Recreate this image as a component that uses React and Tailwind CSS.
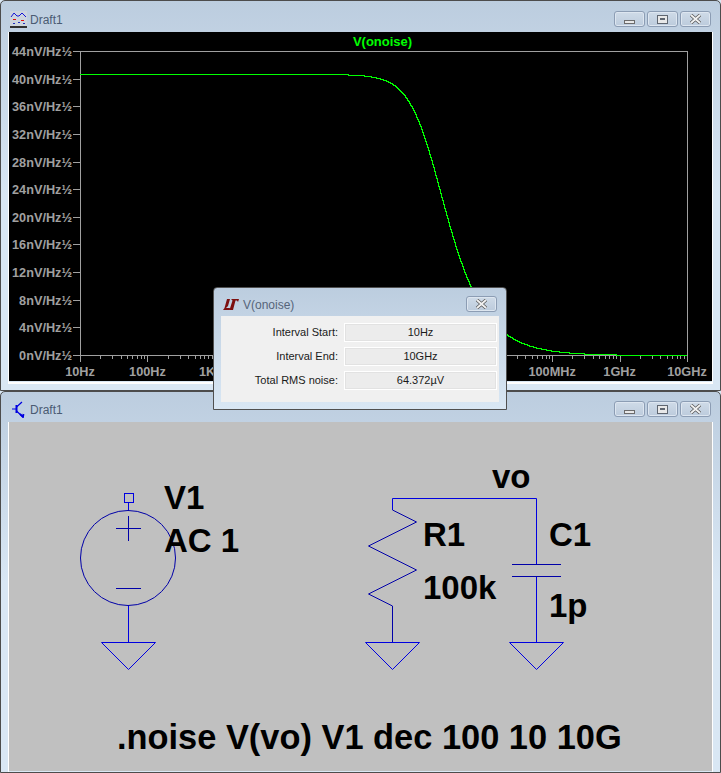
import React from 'react';

const UI_FONT = "font-['Liberation_Sans',sans-serif]";

const yTicks = [44, 40, 36, 32, 28, 24, 20, 16, 12, 8, 4, 0];
const xLabels = ['10Hz', '100Hz', '1KHz', '10KHz', '100KHz', '1MHz', '10MHz', '100MHz', '1GHz', '10GHz'];

const PLOT = { left: 80, right: 687, top: 51, bottom: 355 };
const DECADE = (PLOT.right - PLOT.left) / 9;

const yOf = (v) => PLOT.bottom - (v * (PLOT.bottom - PLOT.top)) / 44;

// single pole rolloff of the RC, 1/(2*pi*R*C) = 1.59MHz
function curvePoints() {
  const pts = [];
  for (let x = PLOT.left; x <= PLOT.right; x += 1) {
    const f = Math.pow(10, 1 + (x - PLOT.left) / DECADE);
    const v = 40.67 / Math.sqrt(1 + Math.pow(f / 1.59e6, 2));
    pts.push(`${x},${Math.round(yOf(v)) + 0.5}`);
  }
  return pts.join(' ');
}

function minorTicks() {
  const out = [];
  for (let d = 0; d < 9; d++) {
    for (let m = 2; m < 10; m++) {
      const x = Math.round(PLOT.left + (d + Math.log10(m)) * DECADE) + 0.5;
      out.push(<line key={`${d}-${m}`} x1={x} x2={x} y1={355} y2={359} />);
    }
  }
  return out;
}

function WaveIcon() {
  return (
    <svg width="17" height="17" viewBox="0 0 17 17" shapeRendering="crispEdges" fill="none">
      <rect x="0" y="0" width="17" height="16" fill="#cdd5de" />
      <path d="M1 6 L4 2 L7 5 L9 5 L12 2 L16 6" stroke="#1414d8" shapeRendering="auto" />
      <path d="M3 8.5 H6 M11 9.5 H14" stroke="#e01010" />
      <path d="M3 12.5 H5 M8 11.5 H10 M13 12.5 H15" stroke="#2030c0" />
      <path d="M0 15.5 H17" stroke="#303030" strokeWidth="2" />
    </svg>
  );
}

function TransistorIcon() {
  return (
    <svg width="17" height="17" viewBox="0 0 17 17" fill="none" stroke="#0000e0" strokeWidth="1.2">
      <path d="M6.5 4 V12" strokeWidth="2" />
      <path d="M2 8 H6.5 M6.5 6 L12 1 M6.5 10 L13 16" />
      <path d="M10 13 L13 16 L13.5 13" strokeWidth="1.8" />
    </svg>
  );
}

function CaptionButton({ kind }) {
  return (
    <div className="h-[16px] w-[31px] rounded-[3px] border border-[#8c9db4] bg-gradient-to-b from-[#cfdbe8] to-[#bccbdc] flex items-center justify-center shadow-[inset_0_0_0_1px_#dde6f0]">
      {kind === 'min' && <div className="w-[11px] h-[4px] mt-[5px] bg-[#e8e8e8] border border-[#6b6b6b]" />}
      {kind === 'max' && <div className="w-[11px] h-[9px] bg-[#e8e8e8] border border-[#5f6670] flex items-center justify-center"><div className="w-[5px] h-[2px] border border-[#5f6670] bg-[#c8d4e2]" /></div>}
      {kind === 'close' && <CloseGlyph />}
    </div>
  );
}

function CloseGlyph() {
  return (
    <svg width="13" height="10" viewBox="0 0 13 10">
      <path d="M2 1 L11 9 M11 1 L2 9" stroke="#5a5a5a" strokeWidth="3.4" />
      <path d="M2 1 L11 9 M11 1 L2 9" stroke="#f2f2f2" strokeWidth="1.8" />
    </svg>
  );
}

function Window({ icon, heightClass, titleClass, children }) {
  return (
    <div className={`${heightClass} flex flex-col rounded-t-[5px] border border-[#4c4c4c] bg-gradient-to-b from-[#bccddf] via-[#d9e7f4] to-[#d9e7f4] overflow-hidden shrink-0`}>
      <div className={`${titleClass} flex items-center shrink-0 pl-[9px] pr-[9px]`}>
        <div className="w-[20px] flex items-center">{icon}</div>
        <span className={`mt-[1px] text-[12px] text-[#4a5b72] ${UI_FONT}`}>Draft1</span>
        <div className="ml-auto flex gap-[2px]">
          <CaptionButton kind="min" />
          <CaptionButton kind="max" />
          <CaptionButton kind="close" />
        </div>
      </div>
      <div className="h-[352px] shrink-0 mx-[7px] border-x border-b-2 border-white">
        {children}
      </div>
    </div>
  );
}

function NoisePlot() {
  return (
    <svg className="block w-[703px] h-[349px] bg-black" viewBox="9 32 703 349">
      <g stroke="#a0a0a0" fill="none" shapeRendering="crispEdges">
        <rect x={PLOT.left + 0.5} y={PLOT.top + 0.5} width={PLOT.right - PLOT.left} height={PLOT.bottom - PLOT.top} />
        {yTicks.map((t) => {
          const y = Math.round(yOf(t)) + 0.5;
          return <line key={t} x1={73} x2={PLOT.left} y1={y} y2={y} />;
        })}
        {xLabels.map((_, i) => {
          const x = Math.round(PLOT.left + i * DECADE) + 0.5;
          return <line key={i} x1={x} x2={x} y1={355} y2={362} />;
        })}
        {minorTicks()}
      </g>
      <polyline points={curvePoints()} fill="none" stroke="#00ff00" shapeRendering="crispEdges" />
      <g className="font-['Liberation_Sans',sans-serif] font-bold text-[12.7px]" fill="#a0a0a0">
        <text x="382.5" y="46" textAnchor="middle" fill="#00ff00" className="text-[13px]">V(onoise)</text>
        {yTicks.map((t) => (
          <text key={t} x="72" y={Math.round(yOf(t)) + 5} textAnchor="end">{t}nV/Hz½</text>
        ))}
        {xLabels.map((l, i) => (
          <text key={l} x={PLOT.left + i * DECADE} y="376" textAnchor="middle">{l}</text>
        ))}
      </g>
    </svg>
  );
}

function Ground({ x }) {
  return <path d={`M${x - 27} 642.5 H${x + 27} L${x} 669.5 Z`} />;
}

function Schematic() {
  return (
    <svg className="block w-[703px] h-[349px] bg-[#c0c0c0]" viewBox="9 422 703 349">
      <g fill="none" stroke="#0000e0">
        <rect x="124.5" y="493.5" width="9" height="9" shapeRendering="crispEdges" />
        <path d="M128.5 503 V511 M128.5 605 V642" shapeRendering="crispEdges" />
        <g stroke="#0000a8">
          <circle cx="128" cy="558" r="47.5" />
          <path d="M116 528.5 H141 M128.5 516 V541 M116 588.5 H141" shapeRendering="crispEdges" />
        </g>
        <Ground x={128.5} />

        <path d="M392.5 510 V498.5 H536.5 V564" />
        <path d="M392.5 510 L416.5 522 L368.5 546 L416.5 570 L368.5 594 L392.5 606 V642" stroke="#0000a8" />
        <Ground x={392.5} />

        <path d="M512 564.5 H561 M512 576.5 H561" stroke="#0000a8" />
        <path d="M536.5 577 V642" />
        <Ground x={536.5} />
      </g>
      <g className="font-['Liberation_Sans',sans-serif] font-bold text-[33px]" fill="#000">
        <text x="164" y="509">V1</text>
        <text x="164" y="552">AC 1</text>
        <text x="492" y="488">vo</text>
        <text x="423" y="546">R1</text>
        <text x="423" y="599">100k</text>
        <text x="549" y="546">C1</text>
        <text x="549" y="617">1p</text>
        <text x="117" y="749" className="text-[34.4px]">.noise V(vo) V1 dec 100 10 10G</text>
      </g>
    </svg>
  );
}

function NoiseDialog() {
  const rows = [
    ['Interval Start:', '10Hz'],
    ['Interval End:', '10GHz'],
    ['Total RMS noise:', '64.372µV'],
  ];
  return (
    <div className={`absolute left-[213px] top-[287px] w-[294px] h-[123px] flex flex-col rounded-t-[4px] border border-[#505050] bg-gradient-to-b from-[#bccddf] to-[#d9e7f4] ${UI_FONT}`}>
      <div className="h-[28px] flex items-center shrink-0 pt-[4px] pl-[9px] pr-[9px]">
        <svg width="16" height="11" viewBox="0 0 16 11" className="mr-[4px]">
          <path d="M4 0 H7 L5 7 L3 9 H7 L6.5 11 H0 L1.5 9 Z M8 0 H16 L15 3 L14 1.5 H12.5 L10 11 H6.5 L9.5 1.5 Z" fill="#7d0f0f" />
        </svg>
        <span className="mt-[1px] text-[12px] text-[#56657a]">V(onoise)</span>
        <div className="ml-auto"><CaptionButton kind="close" /></div>
      </div>
      <div className="flex-1 mx-[7px] mb-[7px] bg-[#f0f0f0] grid grid-cols-[117px_1fr] content-start gap-x-[6px] gap-y-[5px] pr-[2px] py-[7px] text-[11px] text-[#1a1a1a]">
        {rows.map(([label, value]) => (
          <React.Fragment key={label}>
            <div className="text-right h-[19px] leading-[19px]">{label}</div>
            <div className="h-[19px] leading-[17px] text-center border border-white bg-[#ececec] shadow-[inset_0_0_0_1px_#e2e2e2]">{value}</div>
          </React.Fragment>
        ))}
      </div>
    </div>
  );
}

export default function App() {
  return (
    <div className="relative w-[721px] h-[773px] overflow-hidden bg-[#d9e7f4] flex flex-col">
      <Window icon={<WaveIcon />} heightClass="h-[391px]" titleClass="h-[31px] pt-[5px]">
        <NoisePlot />
      </Window>
      <Window icon={<TransistorIcon />} heightClass="h-[382px]" titleClass="h-[30px] pt-[4px]">
        <Schematic />
      </Window>
      <NoiseDialog />
    </div>
  );
}
